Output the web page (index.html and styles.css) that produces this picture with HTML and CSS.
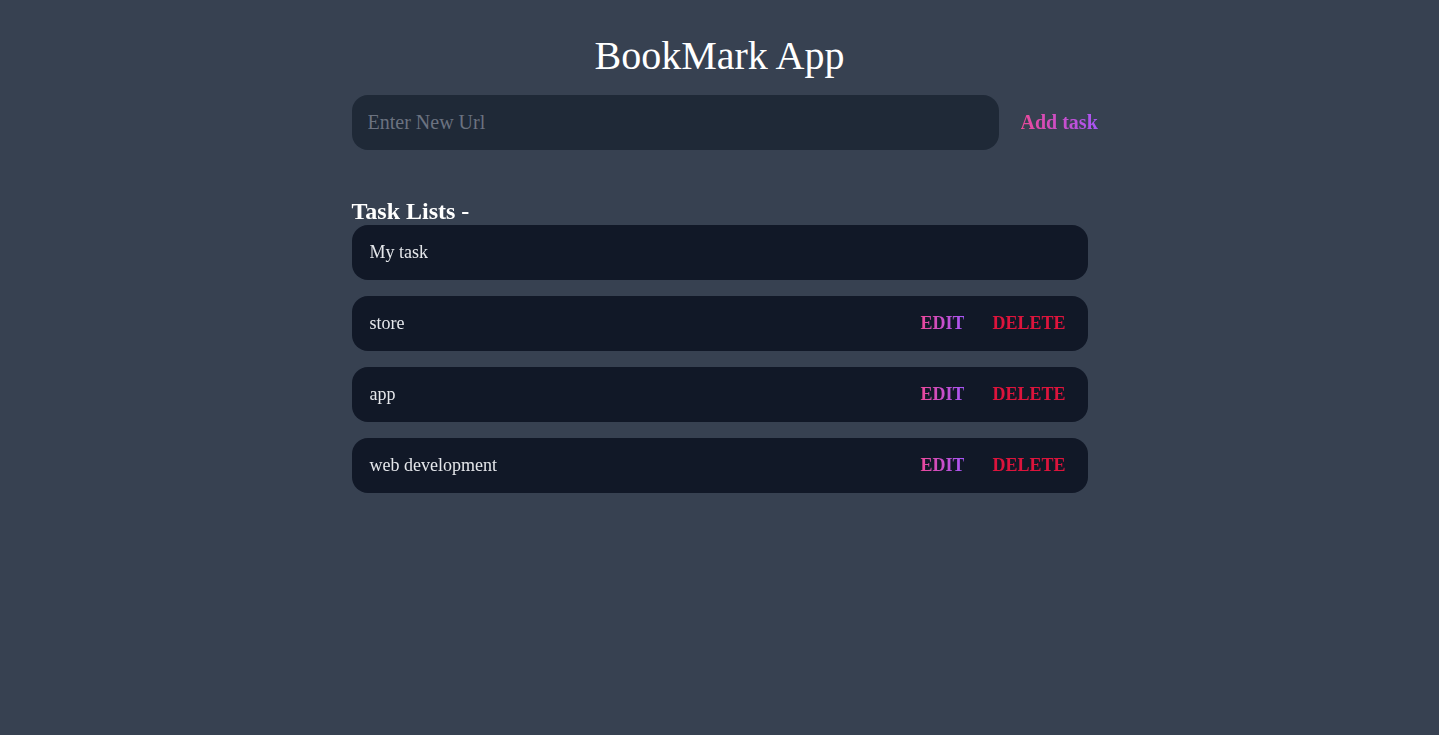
FILE: index.html
```html
<!DOCTYPE html>
<html lang="en">
<head>
<meta charset="utf-8">
<title>BookMark App</title>
<link rel="stylesheet" href="styles.css">
</head>
<body>
<main class="app">
  <h1 class="title">BookMark App</h1>
  <form class="add-row" onsubmit="return false">
    <input class="url-input" type="text" placeholder="Enter New Url" autofocus>
    <button class="add-btn" type="submit"><span class="grad">Add task</span></button>
  </form>
  <h2 class="list-title">Task Lists -</h2>
  <ul class="tasks">
    <li class="task"><span class="task-name">My task</span></li>
    <li class="task"><span class="task-name">store</span>
      <div class="actions"><button class="btn edit"><span class="grad">EDIT</span></button><button class="btn delete">DELETE</button></div></li>
    <li class="task"><span class="task-name">app</span>
      <div class="actions"><button class="btn edit"><span class="grad">EDIT</span></button><button class="btn delete">DELETE</button></div></li>
    <li class="task"><span class="task-name">web development</span>
      <div class="actions"><button class="btn edit"><span class="grad">EDIT</span></button><button class="btn delete">DELETE</button></div></li>
  </ul>
</main>
</body>
</html>
```
FILE: styles.css
```css
html, body {
  margin: 0;
  padding: 0;
  background: #374151;
  min-height: 100%;
}
body {
  font-family: "Liberation Serif", "Times New Roman", serif;
  color: #ffffff;
}
.app {
  width: 736px;
  margin: 0 auto;
  padding-top: 33px;
}
.title {
  margin: 0;
  font-size: 40px;
  font-weight: normal;
  line-height: 46px;
  text-align: center;
  color: #ffffff;
}
.add-row {
  display: flex;
  align-items: center;
  margin-top: 16px;
  gap: 22px;
}
.url-input {
  flex: 0 0 647px;
  width: 647px;
  height: 55px;
  box-sizing: border-box;
  border: none;
  outline: none;
  border-radius: 16px;
  background: #1f2937;
  padding: 0 16px;
  font-family: "Liberation Serif", "Times New Roman", serif;
  font-size: 20px;
  color: #e5e7eb;
  caret-color: #ffffff;
}
.url-input::placeholder {
  color: #6b7280;
}
.add-btn {
  flex: 0 0 auto;
  background: none;
  border: none;
  padding: 0;
  font-family: "Liberation Serif", "Times New Roman", serif;
  font-size: 20px;
  font-weight: bold;
  cursor: pointer;
  white-space: nowrap;
}
.grad {
  background: linear-gradient(to right, #ec4899, #a855f7);
  -webkit-background-clip: text;
  background-clip: text;
  color: transparent;
}
.list-title {
  margin: 47px 0 0;
  font-size: 24px;
  line-height: 28px;
  font-weight: bold;
  color: #ffffff;
}
.tasks {
  list-style: none;
  margin: 0;
  padding: 0;
  display: flex;
  flex-direction: column;
  gap: 16px;
}
.task {
  height: 55px;
  box-sizing: border-box;
  background: #111827;
  border-radius: 16px;
  display: flex;
  align-items: center;
  justify-content: space-between;
  padding: 0 22px 0 18px;
}
.task-name {
  font-size: 18px;
  color: #e5e7eb;
}
.actions {
  display: flex;
  gap: 28px;
}
.btn {
  background: none;
  border: none;
  padding: 0;
  font-family: "Liberation Serif", "Times New Roman", serif;
  font-size: 18px;
  font-weight: bold;
  cursor: pointer;
}
.delete {
  color: #dc143c;
}
```
